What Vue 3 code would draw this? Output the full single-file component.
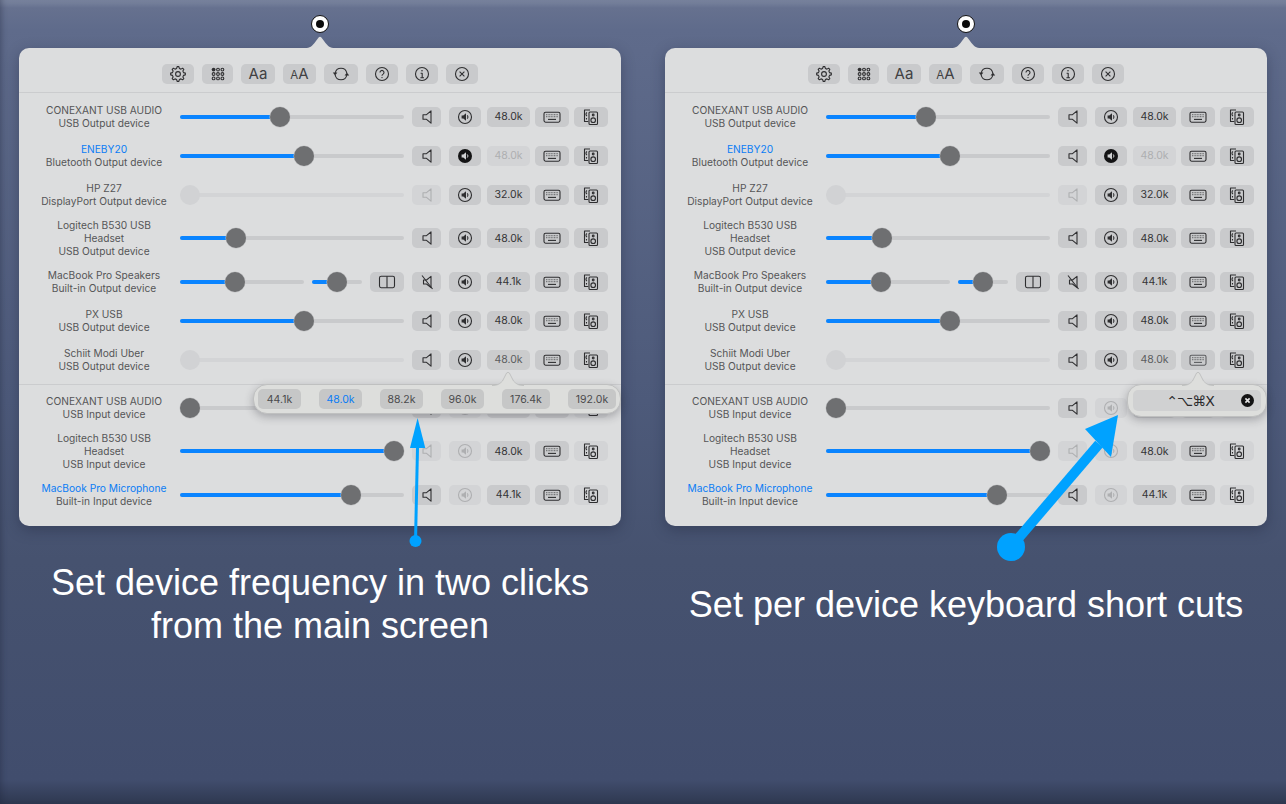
<script setup>
import { h } from 'vue'

function gearPath() {
  const teeth = 8, cx = 10, cy = 10, ro = 7.4, ri = 5.7
  let d = ''
  for (let i = 0; i < teeth; i++) {
    const a = (i / teeth) * Math.PI * 2
    const s = Math.PI / teeth
    const pts = [[ri, a - s * 0.62], [ro, a - s * 0.3], [ro, a + s * 0.3], [ri, a + s * 0.62]]
    pts.forEach(([r, t], j) => {
      const x = (cx + r * Math.cos(t)).toFixed(2)
      const y = (cy + r * Math.sin(t)).toFixed(2)
      d += (i === 0 && j === 0 ? 'M' : 'L') + x + ' ' + y
    })
  }
  return d + 'Z'
}

const G = [5.6, 10, 14.4]
const ICONS = {
  gear: { s: [gearPath()], c: [[10, 10, 2.4]] },
  grid: {
    c: [[G[1], G[0], 1.4], [G[2], G[0], 1.4], [G[0], G[1], 1.4], [G[1], G[1], 1.4], [G[2], G[1], 1.4], [G[0], G[2], 1.4], [G[1], G[2], 1.4], [G[2], G[2], 1.4]],
    fc: [[G[0], G[0], 1.9]]
  },
  refresh: {
    s: ['M4.2 9a5.9 5.9 0 0 1 11.6 0', 'M4.2 11a5.9 5.9 0 0 0 11.6 0'],
    f: ['M1.8 8.6h4.6L4.1 11.6z', 'M13.6 11.4h4.6L15.9 8.4z']
  },
  help: { c: [[10, 10, 6.5]], s: ['M8 8.4a2 2 0 1 1 3.1 1.7c-.8.5-1.1.9-1.1 1.7'], fc: [[10, 13.6, .7]] },
  info: { c: [[10, 10, 6.5]], s: ['M8.6 9.2H10.2V13.8M8.4 13.8H12'], fc: [[10, 6.8, .8]] },
  close: { c: [[10, 10, 6.5]], s: ['M7.6 7.6l4.8 4.8M12.4 7.6l-4.8 4.8'] },
  speaker: { s: ['M6 7.8h3.2L14 3.8v12.4l-4.8-4H6z'] },
  muted: { s: ['M6.5 8h3L14 4.4v11.2L9.5 12h-3z', 'M5 3.5l10.5 13.5'] },
  vol: {
    c: [[10, 10, 6.5]],
    f: ['M6.6 8.6h1.7l2.7-2.3v7.4l-2.7-2.3H6.6z'],
    s: ['M12.2 8.4a2.2 2.2 0 0 1 0 3.2']
  },
  kbd: {
    r: [[2, 5.2, 16, 10, 1.6]],
    d: ['M4 7.7h12', 'M4 9.7h12'],
    s: ['M6 12.4h8']
  },
  boxes: {
    s: ['M9 3H3.5v11.5h3.8', 'M6 5.5c-1.4 1-1.4 2.5 0 3.5', 'M5.5 11v1.5'],
    r: [[8, 5, 8.5, 12.5, 1]],
    c: [[12.2, 8, .9], [12.2, 13.2, 2.3]]
  },
  split: { r: [[2.5, 4.3, 15, 11.4, 1.6]], s: ['M10 4.3v11.4'] }
}

const Ico = (props) => {
  const i = ICONS[props.name]
  const col = props.color || '#2e2e30'
  const sw = 1.1
  const kids = []
  ;(i.r || []).forEach(([x, y, width, height, rx]) => kids.push(h('rect', { x, y, width, height, rx, fill: 'none', stroke: col, 'stroke-width': sw })))
  ;(i.c || []).forEach(([cx, cy, r]) => kids.push(h('circle', { cx, cy, r, fill: 'none', stroke: col, 'stroke-width': sw })))
  ;(i.s || []).forEach((d) => kids.push(h('path', { d, fill: 'none', stroke: col, 'stroke-width': sw, 'stroke-linejoin': 'round' })))
  ;(i.d || []).forEach((d) => kids.push(h('path', { d, fill: 'none', stroke: '#77787a', 'stroke-width': 1.2, 'stroke-dasharray': '1 .6' })))
  ;(i.f || []).forEach((d) => kids.push(h('path', { d, fill: col })))
  ;(i.fc || []).forEach(([cx, cy, r]) => kids.push(h('circle', { cx, cy, r, fill: col })))
  return h('svg', { width: 20, height: 20, viewBox: '0 0 20 20' }, kids)
}
Ico.props = ['name', 'color']

const tools = [
  { icon: 'gear', w: 32 }, { icon: 'grid', w: 31 }, { text: 'Aa', w: 34 }, { small: true, w: 33 },
  { icon: 'refresh', w: 34 }, { icon: 'help', w: 32 }, { icon: 'info', w: 32 }, { icon: 'close', w: 32 }
]

const rows = [
  { lines: ['CONEXANT USB AUDIO', 'USB Output device'], pct: 44, freq: '48.0k' },
  { lines: ['ENEBY20', 'Bluetooth Output device'], pct: 56, freq: '48.0k', active: true, volDark: true, freqOff: true },
  { lines: ['HP Z27', 'DisplayPort Output device'], pct: 0, off: true, freq: '32.0k', spkOff: true },
  { lines: ['Logitech B530 USB', 'Headset', 'USB Output device'], pct: 22.5, freq: '48.0k' },
  { lines: ['MacBook Pro Speakers', 'Built-in Output device'], pct: 43, freq: '44.1k', stereo: true, muted: true },
  { lines: ['PX USB', 'USB Output device'], pct: 56, freq: '48.0k' },
  { lines: ['Schiit Modi Uber', 'USB Output device'], pct: 0, off: true, freq: '48.0k', freqSoft: true, sep: true },
  { lines: ['CONEXANT USB AUDIO', 'USB Input device'], pct: 0, freq: '', volOff: true, soft: true },
  { lines: ['Logitech B530 USB', 'Headset', 'USB Input device'], pct: 100, freq: '48.0k', spkOff: true, volOff: true, soft: true },
  { lines: ['MacBook Pro Microphone', 'Built-in Input device'], pct: 79, freq: '44.1k', active: true, volOff: true, soft: true }
]

const freqs = ['44.1k', '48.0k', '88.2k', '96.0k', '176.4k', '192.0k']

const panels = [
  { id: 'freq', caption: ['Set device frequency in two clicks', 'from the main screen'] },
  { id: 'keys', caption: ['Set per device keyboard short cuts'] }
]

const knob = (pct, w) => ({ left: (pct / 100) * (w - 20) + 'px' })
const fill = (pct, w) => ({ width: pct === 0 ? '0' : 10 + (pct / 100) * (w - 20) + 'px' })
</script>

<template>
  <div class="screen">
    <section v-for="p in panels" :key="p.id" class="col">
      <div class="panel">
        <div class="pin"><span class="pin-dot"></span></div>
        <svg class="beak" width="30" height="14" viewBox="0 0 30 14">
          <path d="M0 14C5 14 7 12 9.5 9L13.6 3.5Q15 2 16.4 3.5L20.5 9C23 12 25 14 30 14z" fill="#dcddde" />
        </svg>

        <div class="toolbar">
          <div v-for="(t, i) in tools" :key="i" class="btn tool" :style="{ width: t.w + 'px' }">
            <Ico v-if="t.icon" :name="t.icon" />
            <span v-else-if="t.text" class="aa">{{ t.text }}</span>
            <span v-else class="aa"><span class="aa-small">A</span>A</span>
          </div>
        </div>

        <div class="rows">
          <div v-for="(r, i) in rows" :key="i" class="row-wrap">
            <div class="row" :class="{ tall: r.lines.length === 3 }">
              <div class="label" :class="{ active: r.active }">
                <div v-for="l in r.lines" :key="l">{{ l }}</div>
              </div>

              <template v-if="r.stereo">
                <div class="slider s-main">
                  <div class="fill" :style="fill(r.pct, 124)"></div>
                  <div class="knob" :style="knob(r.pct, 124)"></div>
                </div>
                <div class="slider s-bal">
                  <div class="fill" :style="fill(50, 50)"></div>
                  <div class="knob" :style="knob(50, 50)"></div>
                </div>
                <div class="btn b-split"><Ico name="split" /></div>
              </template>
              <div v-else class="slider s-full" :class="{ off: r.off }">
                <div class="fill" :style="fill(r.pct, 224)"></div>
                <div class="knob" :style="knob(r.pct, 224)"></div>
              </div>

              <div class="btn b-spk" :class="{ dim: r.spkOff }">
                <Ico :name="r.muted ? 'muted' : 'speaker'" :color="r.spkOff ? '#aeafb1' : undefined" />
              </div>
              <div class="btn b-vol" :class="{ dim: r.volOff }">
                <svg v-if="r.volDark" width="20" height="20" viewBox="0 0 20 20">
                  <circle cx="10" cy="10" r="7" fill="#141415" />
                  <path d="M6.6 8.6h1.7l2.7-2.3v7.4l-2.7-2.3H6.6z" fill="#d0d1d3" />
                  <path d="M12.2 8.4a2.2 2.2 0 0 1 0 3.2" fill="none" stroke="#d0d1d3" />
                </svg>
                <Ico v-else name="vol" :color="r.volOff ? '#aeafb1' : undefined" />
              </div>
              <div class="btn b-freq" :class="{ dim: r.freqOff, soft: r.freqSoft }">{{ r.freq }}</div>
              <div class="btn b-kbd"><Ico name="kbd" :color="r.sep && p.id === 'keys' ? '#5c5d60' : undefined" /></div>
              <div class="btn b-box" :class="{ light: r.soft }"><Ico name="boxes" /></div>
            </div>
            <div v-if="r.sep" class="sep"></div>
          </div>
        </div>

        <div v-if="p.id === 'freq'" class="pop pop-freq">
          <svg class="pop-beak" width="32" height="15" viewBox="0 0 32 15">
            <path d="M0 14.5C6 14.5 8 12.5 10.5 10L14.6 2Q16 .6 17.4 2L21.5 10C24 12.5 26 14.5 32 14.5" fill="#dddedc" stroke="#b9baba" stroke-width=".8" />
          </svg>
          <div
            v-for="f in freqs"
            :key="f"
            class="btn pop-item"
            :class="{ chosen: f === '48.0k', wide: f.length > 5 }"
          >{{ f }}</div>
        </div>
        <div v-else class="pop pop-keys">
          <svg class="pop-beak" width="32" height="15" viewBox="0 0 32 15">
            <path d="M0 14.5C6 14.5 8 12.5 10.5 10L14.6 2Q16 .6 17.4 2L21.5 10C24 12.5 26 14.5 32 14.5" fill="#dddedc" stroke="#b9baba" stroke-width=".8" />
          </svg>
          <div class="field">
            <span class="combo">⌃⌥⌘X</span>
            <span class="clear">
              <svg width="13" height="13" viewBox="0 0 13 13">
                <circle cx="6.5" cy="6.5" r="6.5" fill="#141415" />
                <path d="M4.4 4.4l4.2 4.2M8.6 4.4l-4.2 4.2" stroke="#e6e6e6" stroke-width="1.6" />
              </svg>
            </span>
          </div>
        </div>
      </div>

      <div class="caption">
        <div v-for="l in p.caption" :key="l">{{ l }}</div>
      </div>

      <svg v-if="p.id === 'freq'" class="arrow arrow-freq" width="40" height="140" viewBox="0 0 40 140">
        <path d="M15.5 128.5L17.5 35" stroke="#00a2ff" stroke-width="3" />
        <path d="M17.6 5L25.3 35H10z" fill="#00a2ff" />
        <circle cx="15.5" cy="128" r="6" fill="#00a2ff" />
      </svg>
      <svg v-else class="arrow arrow-keys" width="150" height="170" viewBox="0 0 150 170">
        <path d="M30 147L118 44" stroke="#00a2ff" stroke-width="10" />
        <path d="M137 15L104 29L130 57z" fill="#00a2ff" />
        <circle cx="30" cy="147" r="14" fill="#00a2ff" />
      </svg>
    </section>
  </div>
</template>

<style>
html, body { margin: 0; background: #45516f; }
</style>

<style scoped>
.screen {
  position: relative;
  width: 1286px;
  height: 804px;
  box-sizing: border-box;
  padding: 48px 0 0 19px;
  display: flex;
  gap: 44px;
  overflow: hidden;
  font-family: Inter, "Noto Sans", sans-serif;
  background: linear-gradient(180deg, #7b86a0 0, #66718f 8px, #5f6b8b 30px, #4d5a7a 400px, #46526f 560px, #414d6d 780px, #2e3850 804px);
  box-shadow: inset 5px 0 6px -4px rgba(30, 38, 60, .45);
}
.col { position: relative; width: 602px; }
.panel {
  position: relative;
  width: 602px;
  height: 478px;
  box-sizing: border-box;
  background: #dcddde;
  border-radius: 10px;
  box-shadow: 0 4px 14px rgba(25, 32, 55, .35);
}
.pin {
  position: absolute; left: 292px; top: -33px;
  width: 18px; height: 18px; box-sizing: border-box;
  border: 1px solid #111; border-radius: 50%; background: #fff;
  display: flex; align-items: center; justify-content: center;
}
.pin-dot { width: 8px; height: 8px; border-radius: 50%; background: #0b0b0b; }
.beak { position: absolute; left: 286px; top: -14px; display: block; }
.toolbar {
  display: flex; justify-content: center; gap: 8px;
  height: 20px; padding: 16px 0 8px;
  border-bottom: 1px solid #cbccce;
}
.btn {
  height: 20px; border-radius: 5px; background: #c9cacc;
  display: flex; align-items: center; justify-content: center;
  flex: none; box-sizing: border-box; color: #343436;
}
.aa { font-size: 15px; line-height: 20px; color: #414143; }
.aa-small { font-size: 11.5px; }
.rows { padding-top: 4px; }
.row {
  height: 39px; display: flex; align-items: center;
  padding-left: 20px;
}
.row.tall { height: 48px; }
.sep { height: 1px; margin: 5px 0 3px; background: #cbccce; }
.label {
  width: 130px; flex: none; margin-right: 11px;
  text-align: center; font-size: 10.2px; line-height: 13px; color: #555557;
  white-space: nowrap;
}
.label.active div:first-child { color: #0a7cf5; }
.slider { position: relative; height: 4px; border-radius: 2px; background: #c9cacc; flex: none; }
.s-full { width: 224px; }
.s-main { width: 124px; }
.s-bal { width: 50px; margin-left: 8px; }
.fill { position: absolute; left: 0; top: 0; height: 4px; border-radius: 2px; background: #0a84ff; }
.knob {
  position: absolute; top: -8px; width: 20px; height: 20px; border-radius: 50%;
  background: #6e6f71; box-shadow: 0 0 0 .5px #c2c3c5;
}
.slider.off { background: #d3d4d6; }
.slider.off .knob { background: #d1d2d4; box-shadow: none; }
.b-split { width: 34px; margin-left: 8px; }
.b-spk { width: 29px; margin-left: 8px; }
.b-vol { width: 32px; margin-left: 8px; }
.b-freq { width: 43px; margin-left: 6px; font-size: 10.5px; }
.b-kbd { width: 34px; margin-left: 5px; }
.b-box { width: 34px; margin-left: 5px; }
.btn.dim { background: #d3d4d6; color: #aeafb1; }
.btn.soft { color: #5c5d5f; background: #cbcccd; }
.btn.light { background: #d3d4d6; }
.pop {
  position: absolute; top: 336px; right: 0; box-sizing: border-box;
  background: #dddedc; border: 1px solid #bfc0c0; border-radius: 14px;
  box-shadow: 0 3px 8px rgba(40, 40, 50, .3);
  display: flex; align-items: center;
}
.pop-beak { position: absolute; top: -14px; display: block; }
.pop-freq { width: 368px; height: 30px; padding: 0 4px; justify-content: space-between; }
.pop-freq .pop-beak { left: 238px; }
.pop-item { width: 43px; font-size: 10.5px; color: #4a4a4c; background: #c6c7c7; }
.pop-item.wide { width: 48px; }
.pop-item.chosen { color: #0a7cf5; }
.pop-keys { width: 140px; height: 33px; padding: 0 5px; }
.pop-keys .pop-beak { left: 54px; }
.field {
  position: relative; flex: 1; height: 21px; border-radius: 5px; background: #d0d1d2;
  display: flex; align-items: center; justify-content: center;
}
.combo { font-family: "DejaVu Sans", sans-serif; font-size: 14px; letter-spacing: -1px; color: #2b2b2d; margin-left: -14px; }
.clear { position: absolute; right: 7px; top: 4px; line-height: 0; }
.caption {
  height: 86px; margin-top: 35px;
  display: flex; flex-direction: column; align-items: center; justify-content: center;
  font-family: "Liberation Sans", Arial, sans-serif;
  font-size: 36px; line-height: 43px; color: #fff; white-space: nowrap;
}
.arrow { position: absolute; pointer-events: none; }
.arrow-freq { left: 381px; top: 365px; }
.arrow-keys { left: 316px; top: 352px; }
</style>
